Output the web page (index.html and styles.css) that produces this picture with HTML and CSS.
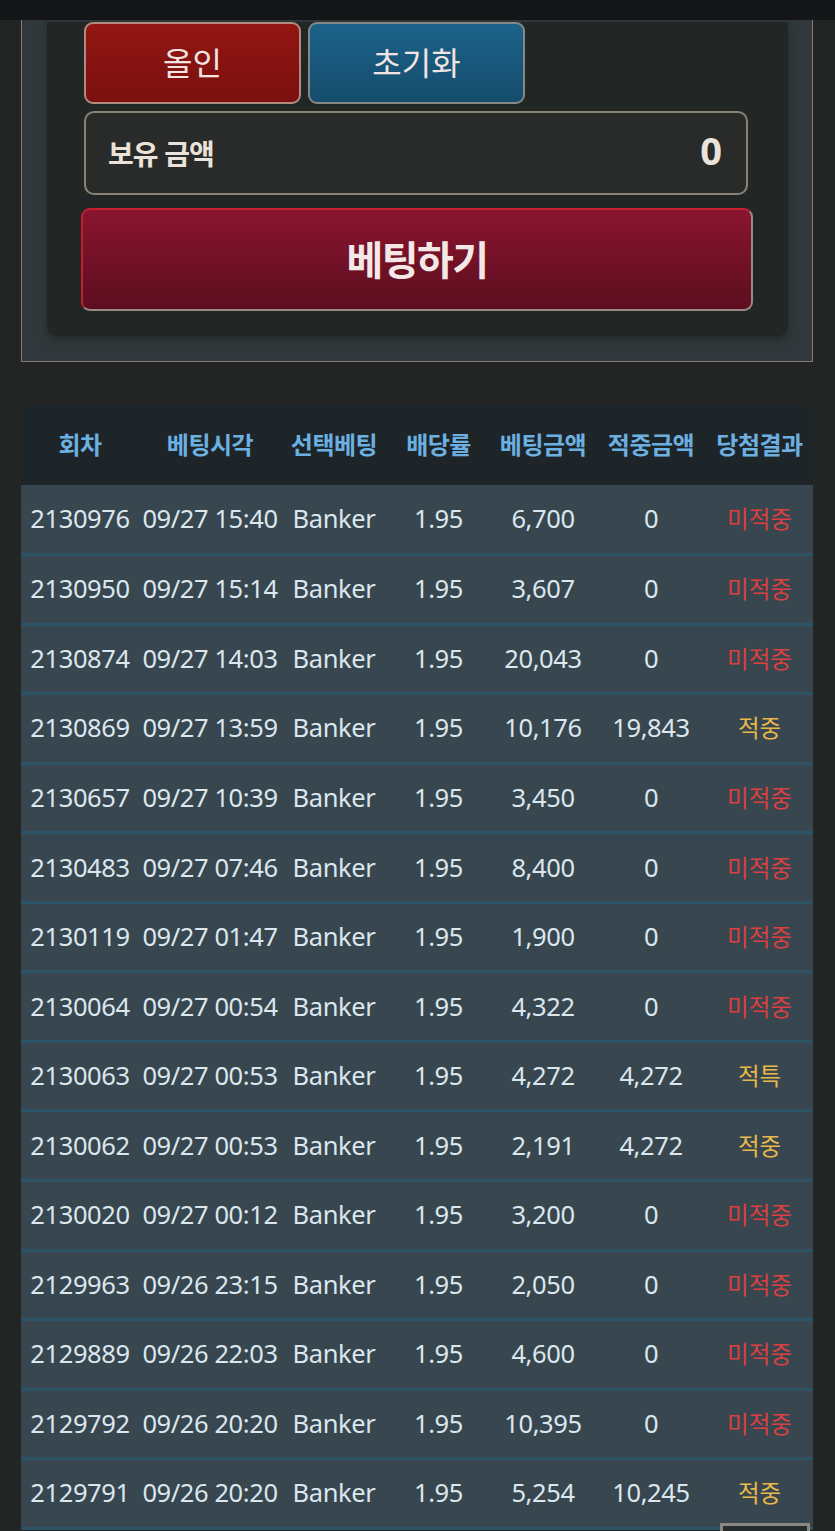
FILE: index.html
```html
<!DOCTYPE html>
<html lang="ko">
<head>
    <meta charset="UTF-8">
    <meta name="viewport" content="width=device-width, initial-scale=1.0">
    <title>베팅 내역</title>
    <link rel="stylesheet" href="styles.css">
</head>
<body>
    <div class="topbar"></div>

    <div class="bet-panel">
        <div class="bet-card">
            <div class="button-row">
                <button class="btn btn-allin">올인</button>
                <button class="btn btn-reset">초기화</button>
            </div>

            <div class="balance">
                <span class="balance-label">보유 금액</span>
                <span class="balance-value">0</span>
            </div>

            <button class="btn-bet">베팅하기</button>
        </div>
    </div>

    <table class="history">
        <colgroup>
            <col style="width:118px">
            <col style="width:142px">
            <col style="width:106px">
            <col style="width:103px">
            <col style="width:106px">
            <col style="width:110px">
            <col style="width:107px">
        </colgroup>
        <thead>
            <tr>
                <th>회차</th>
                <th>베팅시각</th>
                <th>선택베팅</th>
                <th>배당률</th>
                <th>베팅금액</th>
                <th>적중금액</th>
                <th>당첨결과</th>
            </tr>
        </thead>
        <tbody>
            <tr><td>2130976</td><td>09/27 15:40</td><td>Banker</td><td>1.95</td><td>6,700</td><td>0</td><td class="lose">미적중</td></tr>
            <tr><td>2130950</td><td>09/27 15:14</td><td>Banker</td><td>1.95</td><td>3,607</td><td>0</td><td class="lose">미적중</td></tr>
            <tr><td>2130874</td><td>09/27 14:03</td><td>Banker</td><td>1.95</td><td>20,043</td><td>0</td><td class="lose">미적중</td></tr>
            <tr><td>2130869</td><td>09/27 13:59</td><td>Banker</td><td>1.95</td><td>10,176</td><td>19,843</td><td class="win">적중</td></tr>
            <tr><td>2130657</td><td>09/27 10:39</td><td>Banker</td><td>1.95</td><td>3,450</td><td>0</td><td class="lose">미적중</td></tr>
            <tr><td>2130483</td><td>09/27 07:46</td><td>Banker</td><td>1.95</td><td>8,400</td><td>0</td><td class="lose">미적중</td></tr>
            <tr><td>2130119</td><td>09/27 01:47</td><td>Banker</td><td>1.95</td><td>1,900</td><td>0</td><td class="lose">미적중</td></tr>
            <tr><td>2130064</td><td>09/27 00:54</td><td>Banker</td><td>1.95</td><td>4,322</td><td>0</td><td class="lose">미적중</td></tr>
            <tr><td>2130063</td><td>09/27 00:53</td><td>Banker</td><td>1.95</td><td>4,272</td><td>4,272</td><td class="win">적특</td></tr>
            <tr><td>2130062</td><td>09/27 00:53</td><td>Banker</td><td>1.95</td><td>2,191</td><td>4,272</td><td class="win">적중</td></tr>
            <tr><td>2130020</td><td>09/27 00:12</td><td>Banker</td><td>1.95</td><td>3,200</td><td>0</td><td class="lose">미적중</td></tr>
            <tr><td>2129963</td><td>09/26 23:15</td><td>Banker</td><td>1.95</td><td>2,050</td><td>0</td><td class="lose">미적중</td></tr>
            <tr><td>2129889</td><td>09/26 22:03</td><td>Banker</td><td>1.95</td><td>4,600</td><td>0</td><td class="lose">미적중</td></tr>
            <tr><td>2129792</td><td>09/26 20:20</td><td>Banker</td><td>1.95</td><td>10,395</td><td>0</td><td class="lose">미적중</td></tr>
            <tr><td>2129791</td><td>09/26 20:20</td><td>Banker</td><td>1.95</td><td>5,254</td><td>10,245</td><td class="win">적중</td></tr>
        </tbody>
    </table>

    <div class="scroll-top"></div>
</body>
</html>
```

FILE: styles.css
```css
* {
    margin: 0;
    padding: 0;
    box-sizing: border-box;
}

body {
    background-color: #232524;
    font-family: 'Noto Sans', 'Noto Sans CJK KR', sans-serif;
    color: #dce6ee;
    height: 1531px;
    overflow: hidden;
}

.topbar {
    height: 20px;
    background-color: #151617;
}

.bet-panel {
    width: 792px;
    margin-left: 21px;
    background-color: #30383b;
    border: 1px solid #857d70;
    border-top: none;
    padding: 2px 24px 25px 25px;
}

.bet-card {
    background-color: #222726;
    border-radius: 0 0 10px 10px;
    padding: 0 40px 25px 37px;
    box-shadow: 0 4px 8px rgba(0, 0, 0, 0.25);
    display: flex;
    flex-direction: column;
    gap: 7px;
}

.button-row {
    display: flex;
    gap: 7px;
}

.btn {
    width: 217px;
    height: 82px;
    border-radius: 9px;
    border: 2px solid #9c8a80;
    color: #f2e4e0;
    font-family: 'Noto Sans CJK KR', sans-serif;
    font-size: 32px;
    font-weight: 400;
    padding-bottom: 5px;
}

.btn-allin {
    background: linear-gradient(#931612, #7a100f);
    border-color: #b08c80;
}

.btn-reset {
    background: linear-gradient(#1b628a, #154c6c);
    border-color: #868886;
}

.balance {
    height: 84px;
    background-color: #292b2a;
    border: 2px solid #8a8275;
    border-radius: 10px;
    display: flex;
    align-items: center;
    justify-content: space-between;
    padding: 0 24px 6px 22px;
    color: #ebe3d9;
}

.balance-label {
    font-family: 'Noto Sans CJK KR', sans-serif;
    font-size: 28px;
    font-weight: 700;
    letter-spacing: -1px;
    padding-top: 6px;
}

.balance-value {
    font-family: 'Noto Sans', sans-serif;
    font-size: 38px;
    font-weight: 700;
}

.btn-bet {
    height: 103px;
    margin: 6px -5px 0 -3px;
    border-radius: 9px;
    border: 2px solid #9a8a85;
    border-top-color: #c8202e;
    border-left-color: #c41e2c;
    background: linear-gradient(#8a1430, #5c0e1f);
    color: #f4e8e6;
    font-family: 'Noto Sans CJK KR', sans-serif;
    font-size: 40px;
    font-weight: 700;
    letter-spacing: -1.5px;
    padding-bottom: 4px;
}

.history {
    width: 792px;
    margin: 43px 0 0 21px;
    table-layout: fixed;
    border-collapse: collapse;
    text-align: center;
}

.history th {
    height: 80px;
    background-color: #1e2528;
    color: #6cb0e2;
    font-family: 'Noto Sans CJK KR', sans-serif;
    font-size: 24px;
    font-weight: 700;
    letter-spacing: -0.5px;
    padding-bottom: 4px;
    white-space: nowrap;
}

.history td {
    height: 69.55px;
    background-color: #37464f;
    border-bottom: 3px solid #2c5466;
    font-size: 25.5px;
    letter-spacing: -0.4px;
    white-space: nowrap;
    padding-bottom: 2px;
}

.history td.lose,
.history td.win {
    font-family: 'Noto Sans CJK KR', sans-serif;
    font-size: 23.5px;
    letter-spacing: 0;
}

.history td.lose {
    color: #dc4040;
}

.history td.win {
    color: #e8b84a;
}

.scroll-top {
    position: fixed;
    left: 720px;
    top: 1523px;
    width: 90px;
    height: 50px;
    background-color: #262b2e;
    border: 3px solid #8a8880;
}
```
